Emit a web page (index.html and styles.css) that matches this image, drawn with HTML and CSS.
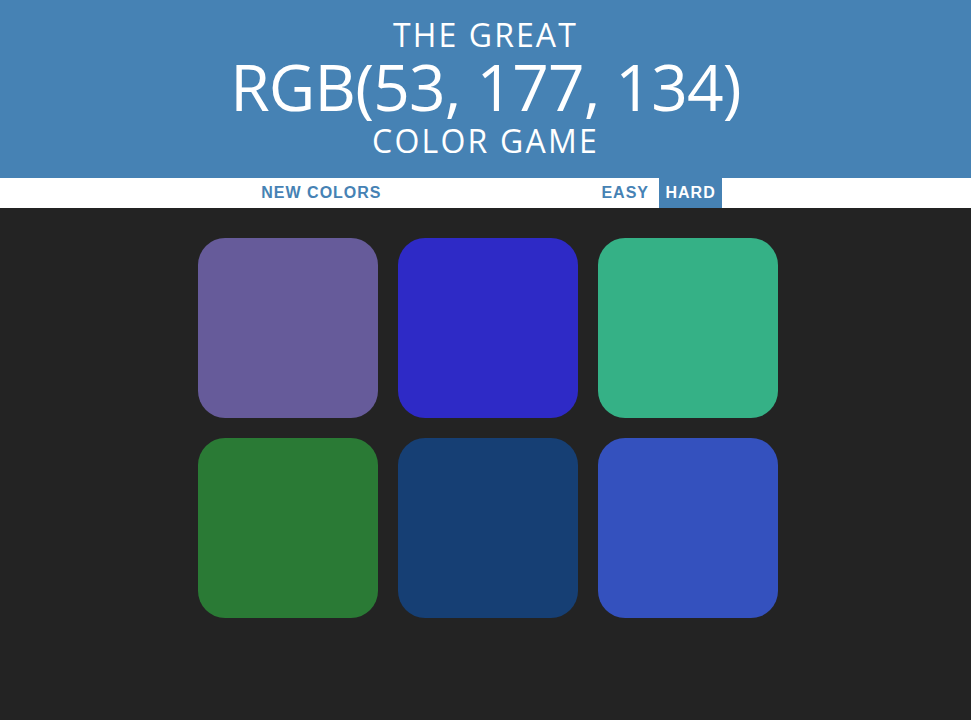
FILE: index.html
```html
<!DOCTYPE html>
<html>
<head>
<meta charset="utf-8">
<title>Color Game</title>
<link rel="stylesheet" href="styles.css">
</head>
<body>
<h1 class="title">
  <span class="title-line title-top">The Great</span>
  <span class="title-rgb">RGB(53, 177, 134)</span>
  <span class="title-line title-bottom">Color Game</span>
</h1>
<div class="stripe">
  <button class="btn">New Colors</button>
  <span class="message"></span>
  <button class="btn">Easy</button>
  <button class="btn btn-selected">Hard</button>
</div>
<div class="board">
  <div class="square sq1"></div>
  <div class="square sq2"></div>
  <div class="square sq3"></div>
  <div class="square sq4"></div>
  <div class="square sq5"></div>
  <div class="square sq6"></div>
</div>
</body>
</html>
```
FILE: styles.css
```css
html, body {
  margin: 0;
  padding: 0;
}
body {
  background: #232323;
  font-family: "Liberation Sans", Arial, sans-serif;
}
.title {
  margin: 0;
  background: #4682b4;
  color: #ffffff;
  text-align: center;
  font-family: "Open Sans", sans-serif;
  font-weight: 400;
  text-transform: uppercase;
  line-height: 1.1;
  height: 178px;
  box-sizing: border-box;
  padding-top: 17px;
  display: flex;
  flex-direction: column;
  align-items: center;
}
.title-line {
  font-size: 32px;
}
.title-top {
  letter-spacing: 2.1px;
}
.title-bottom {
  letter-spacing: 2.2px;
}
.title-rgb {
  font-size: 64px;
  letter-spacing: -0.8px;
}
.stripe {
  background: #ffffff;
  height: 30px;
  text-align: center;
  font-size: 16px;
  padding-left: 6px;
}
.message {
  display: inline-block;
  width: calc(20% + 6px);
}
.btn {
  border: none;
  background: #ffffff;
  color: #4682b4;
  font-family: "Liberation Sans", Arial, sans-serif;
  font-weight: 700;
  font-size: 16px;
  letter-spacing: 1px;
  text-transform: uppercase;
  height: 100%;
  padding: 0 6px;
  outline: none;
  margin: 0;
}
.btn-selected {
  background: #4682b4;
  color: #ffffff;
}
.board {
  width: 580px;
  margin: 30px auto 0;
  padding-left: 5px;
  display: grid;
  grid-template-columns: repeat(3, 180px);
  gap: 20px;
}
.square {
  width: 180px;
  height: 180px;
  border-radius: 27px;
}
.sq1 { background: #665b9a; }
.sq2 { background: #2e2ac6; }
.sq3 { background: #35b186; }
.sq4 { background: #2a7a35; }
.sq5 { background: #163f74; }
.sq6 { background: #3451be; }
```
